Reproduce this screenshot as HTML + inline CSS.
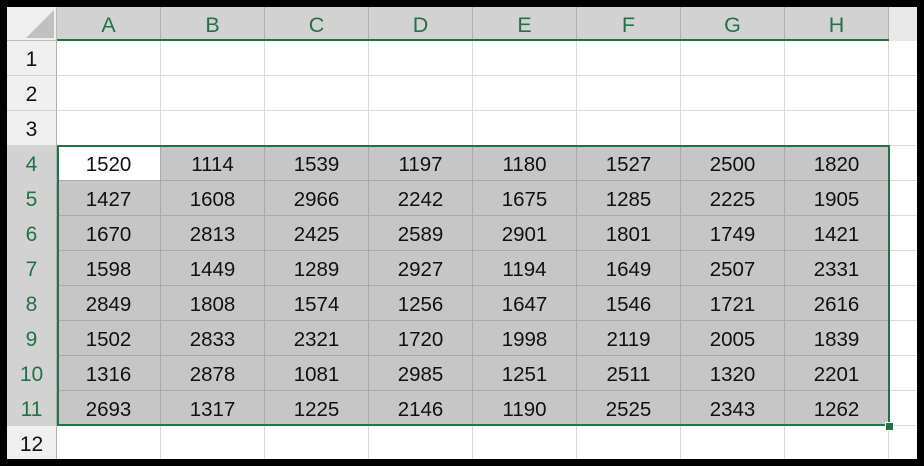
<!DOCTYPE html>
<html><head><style>
body{margin:0;background:#000;width:924px;height:466px;overflow:hidden;font-family:"Liberation Sans",sans-serif}
#s{position:absolute;left:7px;top:7px;width:910px;height:452px;background:#fff;overflow:hidden}
.c{position:absolute;box-sizing:border-box;text-align:center;font-size:20.5px;color:#111}
</style></head><body><div id="s"></div>
<script>
const d=[[1520,1114,1539,1197,1180,1527,2500,1820],[1427,1608,2966,2242,1675,1285,2225,1905],[1670,2813,2425,2589,2901,1801,1749,1421],[1598,1449,1289,2927,1194,1649,2507,2331],[2849,1808,1574,1256,1647,1546,1721,2616],[1502,2833,2321,1720,1998,2119,2005,1839],[1316,2878,1081,2985,1251,2511,1320,2201],[2693,1317,1225,2146,1190,2525,2343,1262]];
let h='';const s=document.getElementById('s');
const X=c=>50+c*104, Y=r=>34+(r-1)*35;
h+=`<div class="c" style="left:0;top:0;width:50px;height:34px;background:#efefef;border-right:1px solid #bbb;border-bottom:1px solid #bbb"></div><svg style="position:absolute;left:0;top:0" width="50" height="34"><polygon points="47,3 47,31 19,31" fill="#c0c0c0"/></svg>`;
const cols='ABCDEFGH';
for(let c=0;c<9;c++){h+=`<div class="c" style="left:${X(c)}px;top:0;width:${c<8?104:30}px;height:34px;background:${c<8?'#d2d2d2':'#e8e8e8'};border-right:1px solid #b0b0b0;color:#217346;line-height:37px;font-size:21.5px">${c<8?cols[c]:''}</div>`}
h+=`<div style="position:absolute;left:50px;top:32px;width:832px;height:2px;background:#217346"></div>`;
for(let r=1;r<=12;r++){const sel=r>=4&&r<=11;
h+=`<div class="c" style="left:0;top:${Y(r)}px;width:50px;height:35px;background:${sel?'#d2d2d2':'#efefef'};border-right:1px solid #b0b0b0;border-bottom:1px solid #d0d0d0;line-height:37px;font-size:21px;color:${sel?'#217346':'#111'}">${r}</div>`;
for(let c=0;c<9;c++){const cs=sel&&c<8;const v=cs?d[r-4][c]:'';const bg=(r==4&&c==0)?'#fff':cs?'#c6c6c6':'#fff';const bc=cs?'#ababab':'#dadada';
h+=`<div class="c" style="left:${X(c)}px;top:${Y(r)}px;width:104px;height:35px;background:${bg};border-right:1px solid ${bc};border-bottom:1px solid ${bc};line-height:37px">${v}</div>`}}
h+=`<div style="position:absolute;left:50px;top:138px;width:833px;height:281px;box-sizing:border-box;border:2px solid #217346"></div>`;
h+=`<div style="position:absolute;left:878px;top:415px;width:7px;height:7px;background:#217346;border:1px solid #fff"></div>`;
s.innerHTML=h;
</script></body></html>
